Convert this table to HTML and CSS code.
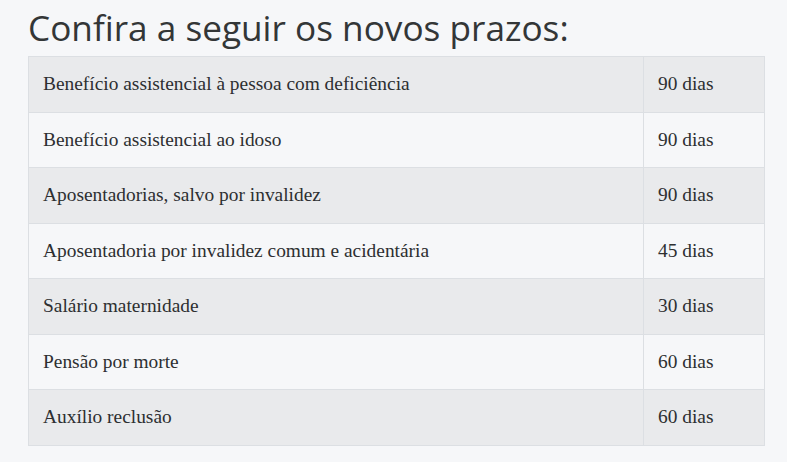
FILE: index.html
```html
<!DOCTYPE html>
<html lang="pt">
<head>
<meta charset="utf-8">
<link rel="stylesheet" href="styles.css">
</head>
<body>
<div class="wrap">
  <h2 class="title">Confira a seguir os novos prazos:</h2>
  <table class="prazos">
    <tbody>
      <tr><td class="name">Benefício assistencial à pessoa com deficiência</td><td class="days">90 dias</td></tr>
      <tr><td class="name">Benefício assistencial ao idoso</td><td class="days">90 dias</td></tr>
      <tr><td class="name">Aposentadorias, salvo por invalidez</td><td class="days">90 dias</td></tr>
      <tr><td class="name">Aposentadoria por invalidez comum e acidentária</td><td class="days">45 dias</td></tr>
      <tr><td class="name">Salário maternidade</td><td class="days">30 dias</td></tr>
      <tr><td class="name">Pensão por morte</td><td class="days">60 dias</td></tr>
      <tr><td class="name">Auxílio reclusão</td><td class="days">60 dias</td></tr>
    </tbody>
  </table>
</div>
</body>
</html>
```
FILE: styles.css
```css
html, body {
  margin: 0;
  padding: 0;
  background: #f6f7f9;
}
.wrap {
  padding: 6px 22px 0 28px;
}
.title {
  margin: 0 0 8px 0;
  font-family: "Open Sans", sans-serif;
  font-weight: 400;
  font-size: 35.2px;
  line-height: 42px;
  color: #333637;
}
.prazos {
  width: 737px;
  border-collapse: collapse;
  font-family: "Liberation Serif", serif;
  font-size: 19.4px;
  color: #2d2f31;
}
.prazos td {
  height: 55.5px;
  box-sizing: border-box;
  padding: 0 14px;
  border: 1px solid #dcdfe3;
  vertical-align: middle;
}
.prazos tr:nth-child(odd) {
  background: #e9eaec;
}
.prazos tr:nth-child(even) {
  background: #f6f7f9;
}
.prazos .days {
  width: 121px;
}
```
